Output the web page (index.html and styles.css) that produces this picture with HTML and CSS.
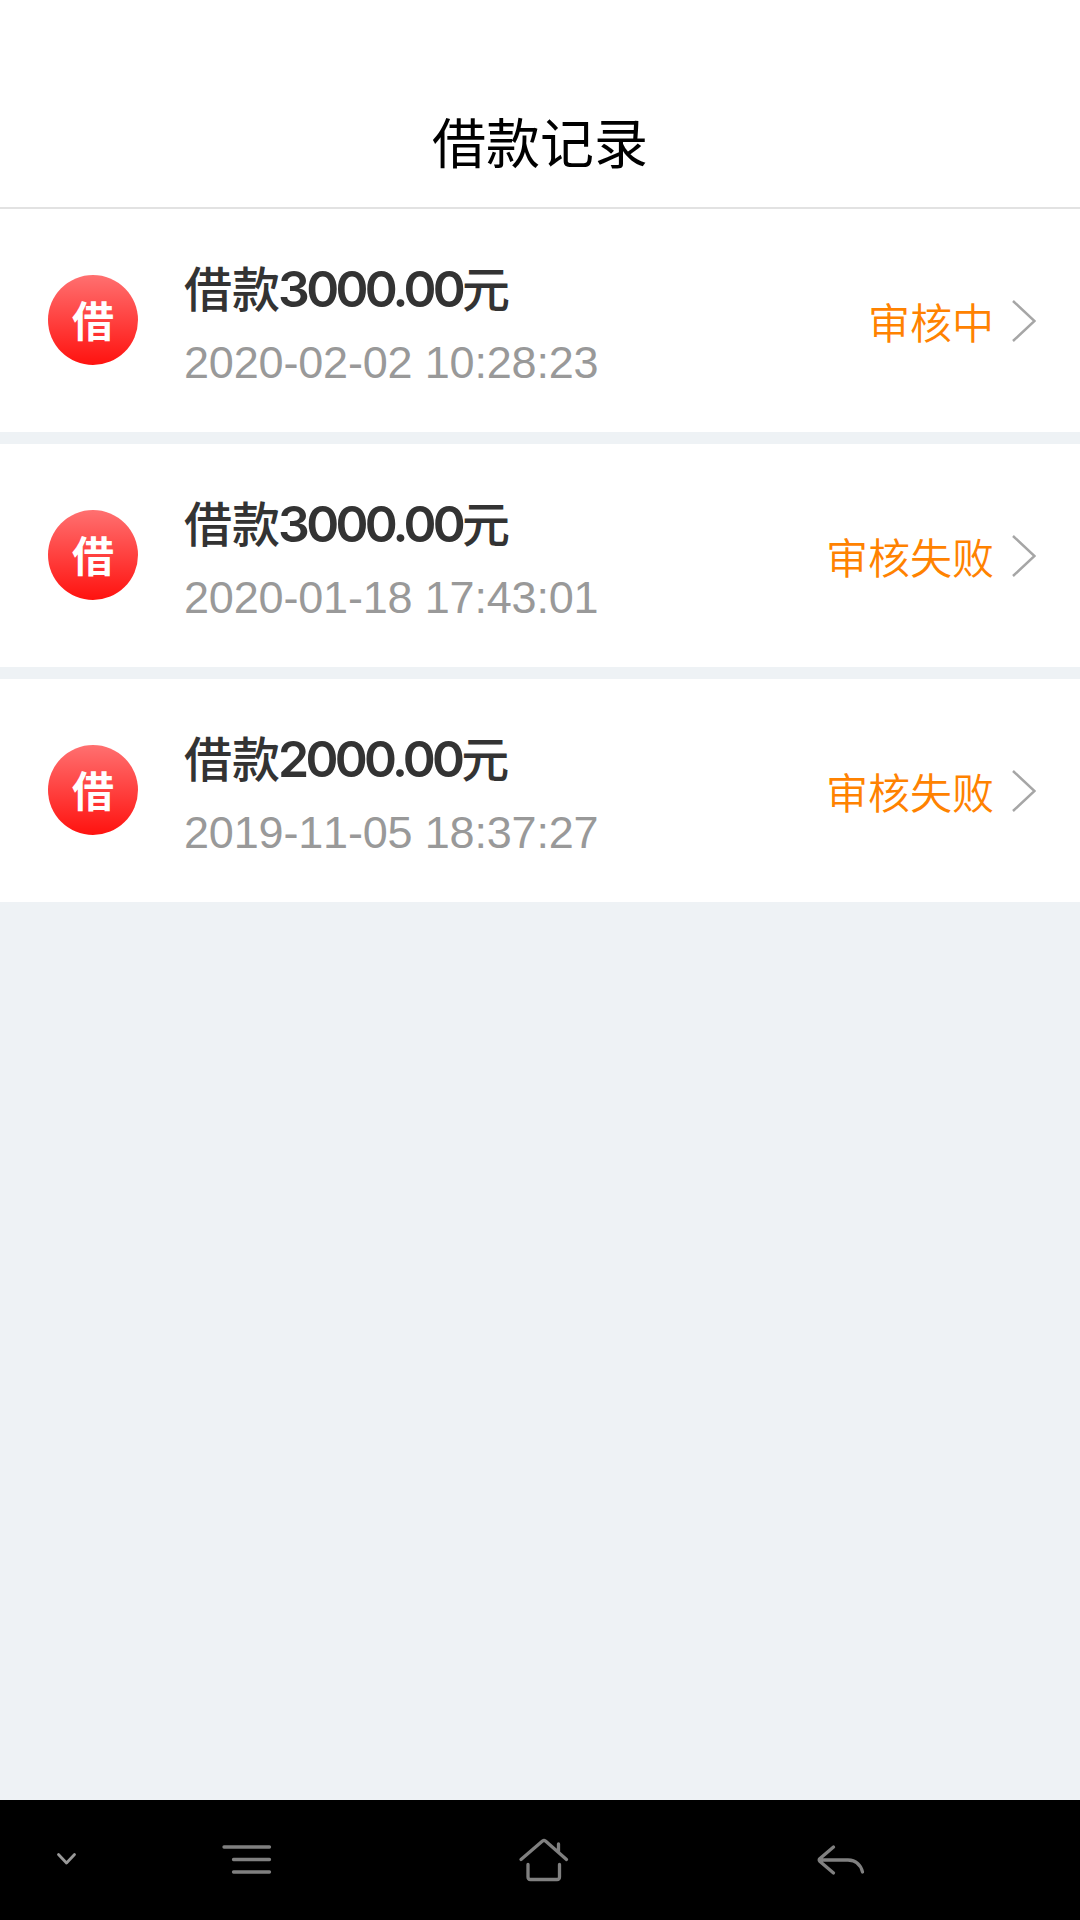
FILE: index.html
```
<!DOCTYPE html>
<html lang="zh-CN">
<head>
  <meta charset="UTF-8" />
  <meta name="viewport" content="width=device-width, initial-scale=1.0"/>
  <title>借款记录</title>
  <link rel="stylesheet" href="styles.css">
</head>
<body>
  <div class="app">
    <header class="header">
      <h1>借款记录</h1>
    </header>

    <!-- Loan records -->
    <main class="records">
      <div class="record">
        <div class="icon">借</div>
        <div class="info">
          <p class="amount">借款<span class="num">3000.00</span>元</p>
          <p class="date">2020-02-02 10:28:23</p>
        </div>
        <span class="status">审核中</span>
        <svg class="arrow" viewBox="0 0 24 42"><path d="M1 1L22.5 21L1 41"/></svg>
      </div>
      <div class="record">
        <div class="icon">借</div>
        <div class="info">
          <p class="amount">借款<span class="num">3000.00</span>元</p>
          <p class="date">2020-01-18 17:43:01</p>
        </div>
        <span class="status">审核失败</span>
        <svg class="arrow" viewBox="0 0 24 42"><path d="M1 1L22.5 21L1 41"/></svg>
      </div>
      <div class="record">
        <div class="icon">借</div>
        <div class="info">
          <p class="amount">借款<span class="num">2000.00</span>元</p>
          <p class="date">2019-11-05 18:37:27</p>
        </div>
        <span class="status">审核失败</span>
        <svg class="arrow" viewBox="0 0 24 42"><path d="M1 1L22.5 21L1 41"/></svg>
      </div>
    </main>

    <!-- System navigation bar -->
    <nav class="navbar">
      <svg class="hide" viewBox="0 0 60 60"><path d="M21.500 24.500L29.500 33L37.500 24.500"/></svg>
      <svg viewBox="0 0 60 60"><path d="M7 17H52.5M16.5 29.5H52.5M16.5 42H52.5"/></svg>
      <svg viewBox="0 0 60 60"><path d="M7 29.5L28.5 11Q30 10 31.5 11L52.5 29.5M44.5 14V22M14 34.5V47Q14 49.5 16.5 49.5H43Q45.5 49.5 45.5 47V34.5"/></svg>
      <svg viewBox="0 0 60 60"><path d="M22.500 17L9 28.500Q7.500 30 9 31.500L22.500 43M9 30H37C45 30 50 35 51.500 42"/></svg>
    </nav>
  </div>
</body>
</html>
```
FILE: styles.css
```
* { box-sizing: border-box; margin: 0; padding: 0; }

body {
  font-family: 'Liberation Sans', 'Noto Sans CJK SC', sans-serif;
  background: #eef2f5;
}

.app {
  height: 1920px;
  display: flex;
  flex-direction: column;
}

.header {
  height: 209px;
  padding-top: 83px;
  background: #fff;
  border-bottom: 2px solid #e2e2e2;
  text-align: center;
}

h1 {
  font-size: 54px;
  font-weight: 400;
  line-height: 124px;
  color: #000;
}

.records {
  flex: 1;
  display: flex;
  flex-direction: column;
  gap: 12px;
}

.record {
  height: 223px;
  padding: 0 44px 1px 48px;
  display: flex;
  align-items: center;
  background: #fff;
}

.icon {
  width: 90px;
  height: 90px;
  border-radius: 50%;
  background: linear-gradient(#ff7070, #ff120f);
  color: #fff;
  font-size: 42px;
  font-weight: 700;
  line-height: 95px;
  text-align: center;
}

.info {
  flex: 1;
  margin-left: 46px;
  padding-top: 10px;
}

.amount {
  font-size: 48px;
  font-weight: 500;
  line-height: 72px;
  color: #333;
}

.num {
  margin-left: -2px;
  font-family: 'Inter', 'Liberation Sans', sans-serif;
  font-size: 50px;
  font-weight: 600;
  letter-spacing: -3.7px;
}

.date {
  font-size: 45px;
  font-kerning: none;
  line-height: 71px;
  letter-spacing: -0.18px;
  color: #999;
}

.status {
  font-size: 42px;
  font-weight: 350;
  color: #ff8200;
}

.arrow {
  width: 24px;
  height: 42px;
  margin: 2px 0 0 18px;
  fill: none;
  stroke: #a6a6a6;
  stroke-width: 2.5;
}

.navbar {
  height: 120px;
  display: grid;
  grid-template-columns: 133px 228px 366px 228px;
  align-items: center;
  justify-items: center;
  background: #000;
}

.navbar svg {
  width: 60px;
  height: 60px;
  fill: none;
  stroke: #808080;
  stroke-width: 3.3;
  stroke-linecap: round;
  stroke-linejoin: round;
}

.navbar .hide {
  stroke: #999;
  stroke-width: 2.8;
}
```
